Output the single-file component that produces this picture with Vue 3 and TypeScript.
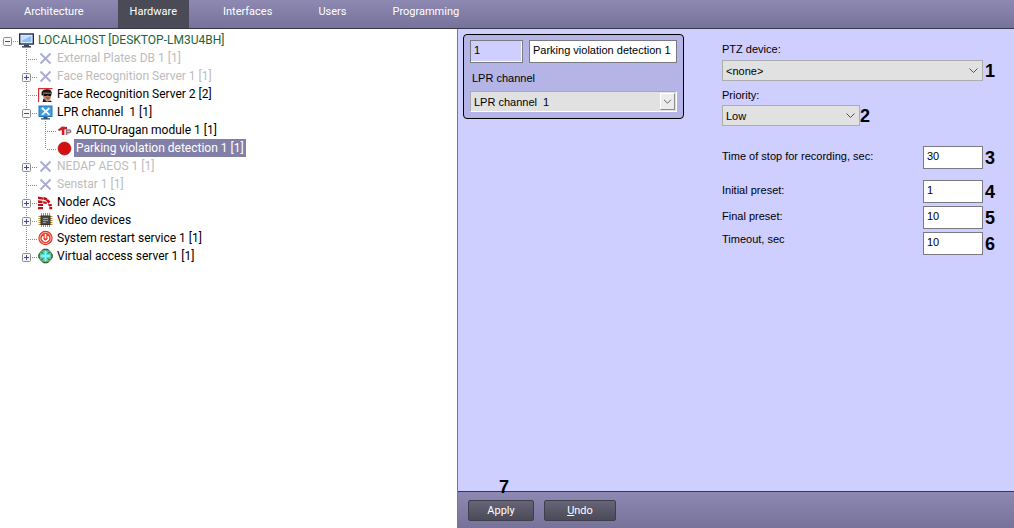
<script setup lang="ts">
import { ref } from 'vue'

type Guide = 'none' | 'line' | 'tee' | 'elbow' | 'root'
type Box = '' | 'plus' | 'minus'
interface Node {
  label: string
  icon: string
  guides: Guide[]
  box: Box
  tone?: 'off' | 'host'
}

const tabs = ['Architecture', 'Hardware', 'Interfaces', 'Users', 'Programming']
const activeTab = ref('Hardware')

const nodes: Node[] = [
  { label: 'LOCALHOST [DESKTOP-LM3U4BH]', icon: 'computer', guides: ['root'], box: 'minus', tone: 'host' },
  { label: 'External Plates DB 1 [1]', icon: 'cross', guides: ['none', 'tee'], box: '', tone: 'off' },
  { label: 'Face Recognition Server 1 [1]', icon: 'cross', guides: ['none', 'tee'], box: 'plus', tone: 'off' },
  { label: 'Face Recognition Server 2 [2]', icon: 'face', guides: ['none', 'tee'], box: '' },
  { label: 'LPR channel  1 [1]', icon: 'tools', guides: ['none', 'tee'], box: 'minus' },
  { label: 'AUTO-Uragan module 1 [1]', icon: 'camera', guides: ['none', 'line', 'tee'], box: '' },
  { label: 'Parking violation detection 1 [1]', icon: 'dot', guides: ['none', 'line', 'elbow'], box: '' },
  { label: 'NEDAP AEOS 1 [1]', icon: 'cross', guides: ['none', 'tee'], box: 'plus', tone: 'off' },
  { label: 'Senstar 1 [1]', icon: 'cross', guides: ['none', 'tee'], box: '', tone: 'off' },
  { label: 'Noder ACS', icon: 'noder', guides: ['none', 'tee'], box: 'plus' },
  { label: 'Video devices', icon: 'chip', guides: ['none', 'tee'], box: 'plus' },
  { label: 'System restart service 1 [1]', icon: 'power', guides: ['none', 'tee'], box: '' },
  { label: 'Virtual access server 1 [1]', icon: 'globe', guides: ['none', 'elbow'], box: 'plus' },
]
const selected = ref(6)

const objectId = ref('1')
const objectName = ref('Parking violation detection 1')
const channel = ref('lpr1')
const device = ref('none')
const priority = ref('low')
const fields = ref([
  { id: 'stop', label: 'Time of stop for recording, sec:', value: '30', mark: 3 },
  { id: 'initial', label: 'Initial preset:', value: '1', mark: 4 },
  { id: 'final', label: 'Final preset:', value: '10', mark: 5 },
  { id: 'timeout', label: 'Timeout, sec', value: '10', mark: 6 },
])
</script>

<template>
  <div class="app">
    <nav class="tabs">
      <button
        v-for="t in tabs"
        :key="t"
        type="button"
        class="tab"
        :class="{ active: t === activeTab }"
        @click="activeTab = t"
      >{{ t }}</button>
    </nav>

    <div class="body">
      <ul class="tree">
        <li v-for="(n, i) in nodes" :key="i" class="row" :class="[n.tone, { selected: i === selected }]" @click="selected = i">
          <svg v-for="(g, k) in n.guides" :key="k" class="guide" width="19" height="18" viewBox="0 0 19 18">
            <g stroke="#8a8a8a" stroke-dasharray="1 1">
              <line v-if="g === 'tee' || g === 'line'" x1="7.5" y1="0" x2="7.5" y2="18" />
              <line v-if="g === 'elbow'" x1="7.5" y1="0" x2="7.5" y2="10" />
              <line v-if="g !== 'none' && g !== 'line'" x1="9" y1="10.5" x2="18" y2="10.5" />
            </g>
            <g v-if="n.box && k === n.guides.length - 1">
              <rect x="3.5" y="6.5" width="8" height="8" rx="1" fill="#f8f8f8" stroke="#8c8c8c" />
              <path :d="n.box === 'plus' ? 'M5 10.5h5M7.5 8v5' : 'M5 10.5h5'" stroke="#3a4c9c" />
            </g>
          </svg>

          <svg class="icon" width="15" height="18" viewBox="0 0 15 18">
            <g v-if="n.icon === 'computer'">
              <rect x=".7" y="3" width="13.6" height="10" fill="#f4f8ff" stroke="#1c2c58" stroke-width="1.4" />
              <rect x="2.5" y="4.8" width="10" height="6.4" fill="#8fc0f4" />
              <path d="M2.5 4.8h10L2.5 10z" fill="#c4e2ff" />
              <path d="M5 13.6h5v1.6H5z" fill="#39445e" />
              <path d="M3 15.2h9v1.3H3z" fill="#20262f" />
            </g>
            <path v-else-if="n.icon === 'cross'" d="M2.5 4.5l10 10M12.5 4.5l-10 10" fill="none" stroke="#a9a9d2" stroke-width="1.8" />
            <g v-else-if="n.icon === 'face'">
              <path d="M.6 17V3.600h13.900" fill="none" stroke="#d03434" stroke-width="1.200" />
              <path d="M4.500 7h8.500v4.500q-.5 4-3 4.500-3.500-.5-4.800-4z" fill="#b98465" />
              <path d="M3.600 10.500Q2.500 4.500 8.500 4.300q6-.2 5.200 5.200l-1.200-1.700-7-.3-.7 3z" fill="#1d1614" />
              <path d="M5.500 8.800h7.800v1.600q-1.800 1-3.200 0h-.8q-2 1-3.800 0z" fill="#0c0c10" />
              <path d="M8.500 13h3" stroke="#6c3424" stroke-width=".8" />
              <path d="M4.500 17l1-3.400 3.500 2.800 3.500-.8 1.500 1.400z" fill="#1c1a1c" />
            </g>
            <g v-else-if="n.icon === 'tools'">
              <rect x="1" y="3" width="13" height="10.500" fill="#3d9ce0" stroke="#2476ba" />
              <path d="M4 5l7.500 6.800M11.500 5L4 11.800" stroke="#f4fbff" stroke-width="1.700" />
              <path d="M3.200 6.300l2-2M10 12.500l2-2" stroke="#d8efff" />
              <path d="M5.500 14h4v1.200h2.500V16.500H3V15.200h2.500z" fill="#3b4e63" />
            </g>
            <g v-else-if="n.icon === 'camera'">
              <path d="M.8 8.800L5 5.500l5 .6v2.100L7.400 8.600V14H4.800V9L2 10z" fill="#c4242a" />
              <path d="M9.600 14V9h2.600q1.500.1 1.500 1.300t-1.500 1.300H10" fill="none" stroke="#8e7a80" stroke-width="1.600" />
            </g>
            <circle v-else-if="n.icon === 'dot'" cx="7.500" cy="9.500" r="6.500" fill="#d2100f" stroke="#b00c10" stroke-width=".6" />
            <g v-else-if="n.icon === 'noder'" fill="#bd1018">
              <path d="M0 3.500l5 1v2.200L0 6zM0 7.200l4.500.6v2.400L0 9.900zM0 11h5v2H0zM0 14h5v2.200H0z" />
              <path d="M5.600 3.800l3.800 1.400-.8 2.500-3.400-1.300zM5.200 8l3.500 1v2l-3.500-.6zM9.900 6l2.600 2.800-2.200 1.900-2.100-2.900zM9.600 11.500l3.800-.8.6 2.300-2.700.5zM11.300 14h2.900v2.200h-2.900z" />
            </g>
            <g v-else-if="n.icon === 'chip'">
              <path d="M3.500 2v14M5.500 2v14M7.500 2v14M9.500 2v14M11.500 2v14M.5 5.500h14M.5 7.500h14M.5 9.500h14M.5 11.500h14M.5 13.500h14" stroke="#c0922e" />
              <rect x="3" y="5" width="9" height="8.500" fill="#4a494c" stroke="#35302a" />
              <path d="M5 7.500h5M5 9.500h5M5 11.500h3" stroke="#b4b4b4" stroke-width=".8" />
            </g>
            <g v-else-if="n.icon === 'power'">
              <circle cx="7.500" cy="9" r="7.200" fill="#e03424" />
              <circle cx="7.500" cy="9" r="5.600" fill="#e8412f" stroke="#ffd6d0" stroke-width=".8" />
              <path d="M5.400 7.200a2.900 2.900 0 1 0 4.200 0M7.500 5v4.200" fill="none" stroke="#fff" stroke-width="1.500" />
            </g>
            <g v-else>
              <circle cx="7.500" cy="9" r="6.500" fill="#6dbb80" stroke="#2f8a50" />
              <path d="M7.500 5v8M3.500 9h8" stroke="#45dfe8" stroke-width="4" />
              <path d="M7.500 4v10M2.500 9h10" stroke="#8ffaff" stroke-width="1.400" />
              <path d="M4.500 2.800L6 2.200h3l1.500.6M4.500 15.200L6 15.800h3l1.500-.6M1.300 6.500L.8 8v2l.5 1.500M13.700 6.500l.5 1.500v2l-.5 1.500M3.500 5l1.500 1.500M11.500 5L10 6.500M3.500 13L5 11.500M11.500 13L10 11.500" fill="none" stroke="#2d4f3e" />
            </g>
          </svg>
          <span class="label">{{ n.label }}</span>
        </li>
      </ul>

      <main class="panel">
        <div class="content">
          <section class="card">
            <div class="ident">
              <input v-model="objectId" class="box id" aria-label="Identifier" readonly />
              <input v-model="objectName" class="box name" aria-label="Name" />
            </div>
            <label class="caption" for="channel">LPR channel</label>
            <div class="pick sunken">
              <select id="channel" v-model="channel"><option value="lpr1">LPR channel&nbsp; 1</option></select>
              <svg class="arrow" width="15" height="17" viewBox="0 0 15 17"><path d="M3.500 6.500l4 4 4-4" /></svg>
            </div>
          </section>

          <section class="form">
            <label class="caption" for="device">PTZ device:</label>
            <div class="line">
              <div class="pick wide">
                <select id="device" v-model="device"><option value="none">&lt;none&gt;</option></select>
                <svg class="arrow" width="15" height="17" viewBox="0 0 15 17"><path d="M3.500 6.500l4 4 4-4" /></svg>
              </div>
              <b class="mark">1</b>
            </div>
            <label class="caption second" for="priority">Priority:</label>
            <div class="line">
              <div class="pick short">
                <select id="priority" v-model="priority"><option value="low">Low</option></select>
                <svg class="arrow" width="15" height="17" viewBox="0 0 15 17"><path d="M3.500 6.500l4 4 4-4" /></svg>
              </div>
              <b class="mark tight">2</b>
            </div>
            <div class="numbers">
              <div v-for="f in fields" :key="f.id" class="line" :class="f.id">
                <label :for="f.id">{{ f.label }}</label>
                <input :id="f.id" v-model="f.value" class="box num" />
                <b class="mark">{{ f.mark }}</b>
              </div>
            </div>
          </section>
        </div>

        <footer class="actions">
          <button type="button" class="apply">Apply<b class="mark over">7</b></button>
          <button type="button" class="undo"><u>U</u>ndo</button>
        </footer>
      </main>
    </div>
  </div>
</template>

<style>
body { margin: 0; }
</style>

<style scoped>
* { box-sizing: border-box; }
.app {
  display: flex;
  flex-direction: column;
  min-height: 100vh;
  font: 11px/14px Roboto, "Liberation Sans", sans-serif;
  color: #000;
  background: #fff;
}
button, input, select { font: inherit; color: inherit; margin: 0; }

.tabs {
  display: flex;
  gap: 22px;
  height: 29px;
  padding-left: 12px;
  background: linear-gradient(#8d89b2, #76729a);
  border-bottom: 1px solid #38364a;
}
.tab {
  border: 0;
  padding: 0 12px 4px;
  background: none;
  color: #fff;
}
.tab.active { background: #4b4a57; }

.body { flex: 1; display: flex; }
.tree {
  flex: 0 0 458px;
  margin: 0;
  padding: 2px 0;
  list-style: none;
  border-right: 1px solid #77758c;
  font: 12px/18px Roboto, "Segoe UI", sans-serif;
}
.row { display: flex; height: 18px; white-space: pre; }
.guide, .icon { flex: none; display: block; }
.label { margin-left: 2px; padding: 0 2px; }
.host { color: #17663c; }
.off { color: #bcbcbc; }
.selected .label { background: #8380a8; color: #fff; }

.panel {
  flex: 1;
  min-width: 0;
  display: flex;
  flex-direction: column;
  background: #ceceff;
}
.content {
  flex: 1;
  display: flex;
  align-items: flex-start;
  padding: 5px 0 5px 5px;
  font-family: "Liberation Sans", Arial, sans-serif;
}
.card {
  flex: 0 0 221px;
  min-width: 0;
  padding: 5px 6px 6px;
  background: #b4b4e6;
  border: 1px solid #000;
  border-radius: 4px;
}
.ident { display: flex; gap: 6px; }
.box {
  height: 23px;
  padding: 0 3px 3px;
  background: #fff;
  border: 1px solid #7a7a82;
  border-radius: 0;
  outline: 0;
}
.id { width: 53px; background: #ceceff; box-shadow: inset -1px -1px #fff; }
.name { flex: 1; width: 0; min-width: 0; }
.caption { display: block; margin-bottom: 4px; }
.card .caption { margin: 8px 2px 6px; }

.pick { position: relative; height: 21px; }
.pick select {
  display: block;
  width: 100%;
  height: 100%;
  padding: 0 20px 0 3px;
  appearance: none;
  background: #e1e1e1;
  border: 1px solid #adadad;
  border-radius: 0;
  outline: 0;
}
.arrow { position: absolute; top: 2px; right: 2px; fill: none; stroke: #505050; pointer-events: none; }
.sunken select { border-color: #a8a8b8 #fff #fff #a8a8b8; }
.sunken .arrow { background: #ececec; border: 1px solid; border-color: #fff #8c8c8c #8c8c8c #fff; }

.form { flex: 1; margin-left: 38px; padding-top: 8px; }
.line { display: flex; align-items: center; }
.wide { flex: 1; }
.short { width: 138px; }
.second { margin: 7px 0 3px; }
.mark { width: 31px; padding-left: 2px; font: bold 18px/20px "Liberation Sans", Arial, sans-serif; }
.tight { padding-left: 0; }
.numbers { display: flex; flex-direction: column; gap: 3px; margin-top: 20px; }
.line label { flex: 1; padding-bottom: 3px; }
.line.stop { margin-bottom: 8px; }
.line.timeout label { padding-bottom: 9px; }
.num { width: 60px; }

.actions {
  display: flex;
  gap: 10px;
  height: 37px;
  padding: 8px 10px;
  background: linear-gradient(#8d89b2, #76729a);
  border-top: 1px solid #38364a;
}
.actions button {
  position: relative;
  height: 21px;
  padding: 0;
  color: #fff;
  background: linear-gradient(#666477, #4b4a58);
  border: 1px solid #3f3e4c;
  border-radius: 2px;
}
.apply { width: 66px; }
.undo { width: 72px; }
.over { position: absolute; top: -24px; left: 28px; width: auto; color: #000; }
</style>
